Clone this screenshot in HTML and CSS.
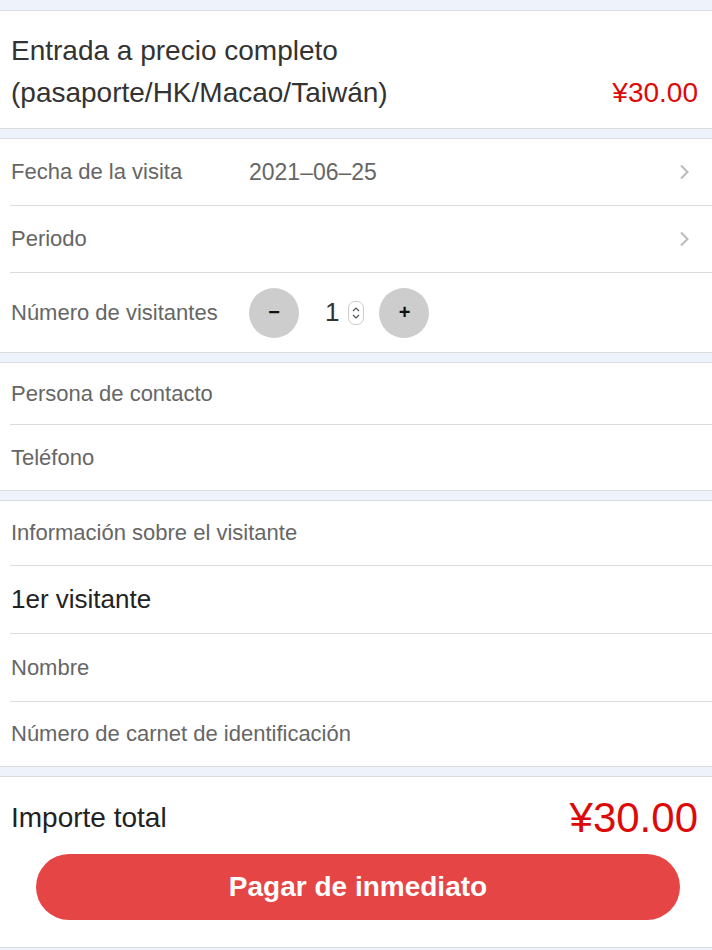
FILE: index.html
```html
<!DOCTYPE html>
<html lang="es">
<head>
    <meta charset="UTF-8">
    <meta name="viewport" content="width=device-width, initial-scale=1.0">
    <title>Reserva de entradas</title>
    <link rel="stylesheet" href="styles.css">
</head>
<body>
    <div class="section ticket">
        <div class="ticket-name">Entrada a precio completo<br>(pasaporte/HK/Macao/Taiwán)</div>
        <div class="ticket-price">¥30.00</div>
    </div>

    <div class="section">
        <div class="row row-date">
            <span class="label">Fecha de la visita</span>
            <span class="value">2021–06–25</span>
            <svg class="chevron" width="12" height="18" viewBox="0 0 12 18"><path d="M3 2.5 L9.5 9 L3 15.5" fill="none" stroke="#bbb" stroke-width="2"/></svg>
        </div>
        <div class="row row-period">
            <span class="label">Periodo</span>
            <span class="value"></span>
            <svg class="chevron" width="12" height="18" viewBox="0 0 12 18"><path d="M3 2.5 L9.5 9 L3 15.5" fill="none" stroke="#bbb" stroke-width="2"/></svg>
        </div>
        <div class="row row-count">
            <span class="label">Número de visitantes</span>
            <div class="stepper">
                <button class="step-btn">&minus;</button>
                <div class="num">
                    <span>1</span>
                    <span class="spin">
                        <svg width="10" height="18" viewBox="0 0 10 18"><path d="M2 7 L5 4 L8 7 M2 11 L5 14 L8 11" fill="none" stroke="#555" stroke-width="1.2"/></svg>
                    </span>
                </div>
                <button class="step-btn">+</button>
            </div>
        </div>
    </div>

    <div class="section">
        <div class="row row-contact"><span class="label">Persona de contacto</span></div>
        <div class="row row-phone"><span class="label">Teléfono</span></div>
    </div>

    <div class="section">
        <div class="row row-info"><span class="label">Información sobre el visitante</span></div>
        <div class="row row-visitor"><span class="visitor-title">1er visitante</span></div>
        <div class="row row-name"><span class="label">Nombre</span></div>
        <div class="row row-id"><span class="label">Número de carnet de identificación</span></div>
    </div>

    <div class="section footer">
        <div class="total">
            <span class="total-label">Importe total</span>
            <span class="total-price">¥30.00</span>
        </div>
        <button class="pay">Pagar de inmediato</button>
    </div>
</body>
</html>
```

FILE: styles.css
```css
body {
    margin: 0;
    padding: 10px 0 0;
    background-color: #eef2fa;
    font-family: "Liberation Sans", Arial, sans-serif;
    color: #333;
}
.section {
    background-color: #fff;
    border-top: 1px solid #dcdcdc;
    border-bottom: 1px solid #dcdcdc;
    margin-bottom: 9px;
}
.ticket {
    display: flex;
    justify-content: space-between;
    align-items: flex-end;
    padding: 19px 14px 14px 11px;
}
.ticket-name {
    font-size: 28px;
    line-height: 42px;
    color: #333;
}
.ticket-price {
    font-size: 28px;
    line-height: 42px;
    color: #dd0a0a;
}
.row {
    display: flex;
    align-items: center;
    margin-left: 10px;
    padding: 0 22px 0 1px;
    border-bottom: 1px solid #dcdcdc;
    font-size: 22px;
}
.row:last-child {
    border-bottom: none;
}
.label {
    color: #666;
}
.row-date .label,
.row-period .label,
.row-count .label {
    width: 238px;
    flex-shrink: 0;
}
.value {
    flex: 1;
    color: #666;
    font-size: 23px;
}
.chevron {
    flex-shrink: 0;
}
.row-date { height: 66px; }
.row-period { height: 66px; }
.row-count { height: 79px; }
.row-contact { height: 61px; }
.row-phone { height: 65px; }
.row-info { height: 64px; }
.row-visitor { height: 67px; }
.row-name { height: 67px; }
.row-id { height: 64px; }
.visitor-title {
    font-size: 26px;
    color: #222;
}
.stepper {
    display: flex;
    align-items: center;
}
.step-btn {
    width: 50px;
    height: 50px;
    border: none;
    border-radius: 50%;
    background-color: #cdcdcd;
    color: #111;
    font-family: "Liberation Sans", Arial, sans-serif;
    font-size: 20px;
    font-weight: bold;
    padding: 0;
}
.num {
    display: flex;
    align-items: center;
    gap: 9px;
    padding: 0 15px 0 26px;
    font-size: 26px;
    color: #333;
}
.spin {
    display: flex;
    align-items: center;
    justify-content: center;
    width: 14px;
    height: 22px;
    border: 1px solid #ccc;
    border-radius: 7px;
}
.footer {
    padding: 5px 32px 27px 36px;
}
.total {
    display: flex;
    justify-content: space-between;
    align-items: center;
    height: 72px;
    margin: 0 -18px 0 -25px;
}
.total-label {
    font-size: 28px;
    color: #222;
}
.total-price {
    font-size: 42px;
    color: #dd0a0a;
}
.pay {
    display: block;
    width: 100%;
    height: 66px;
    border: none;
    border-radius: 33px;
    background-color: #e54545;
    color: #fff;
    font-family: "Liberation Sans", Arial, sans-serif;
    font-size: 28px;
    font-weight: bold;
}
```
